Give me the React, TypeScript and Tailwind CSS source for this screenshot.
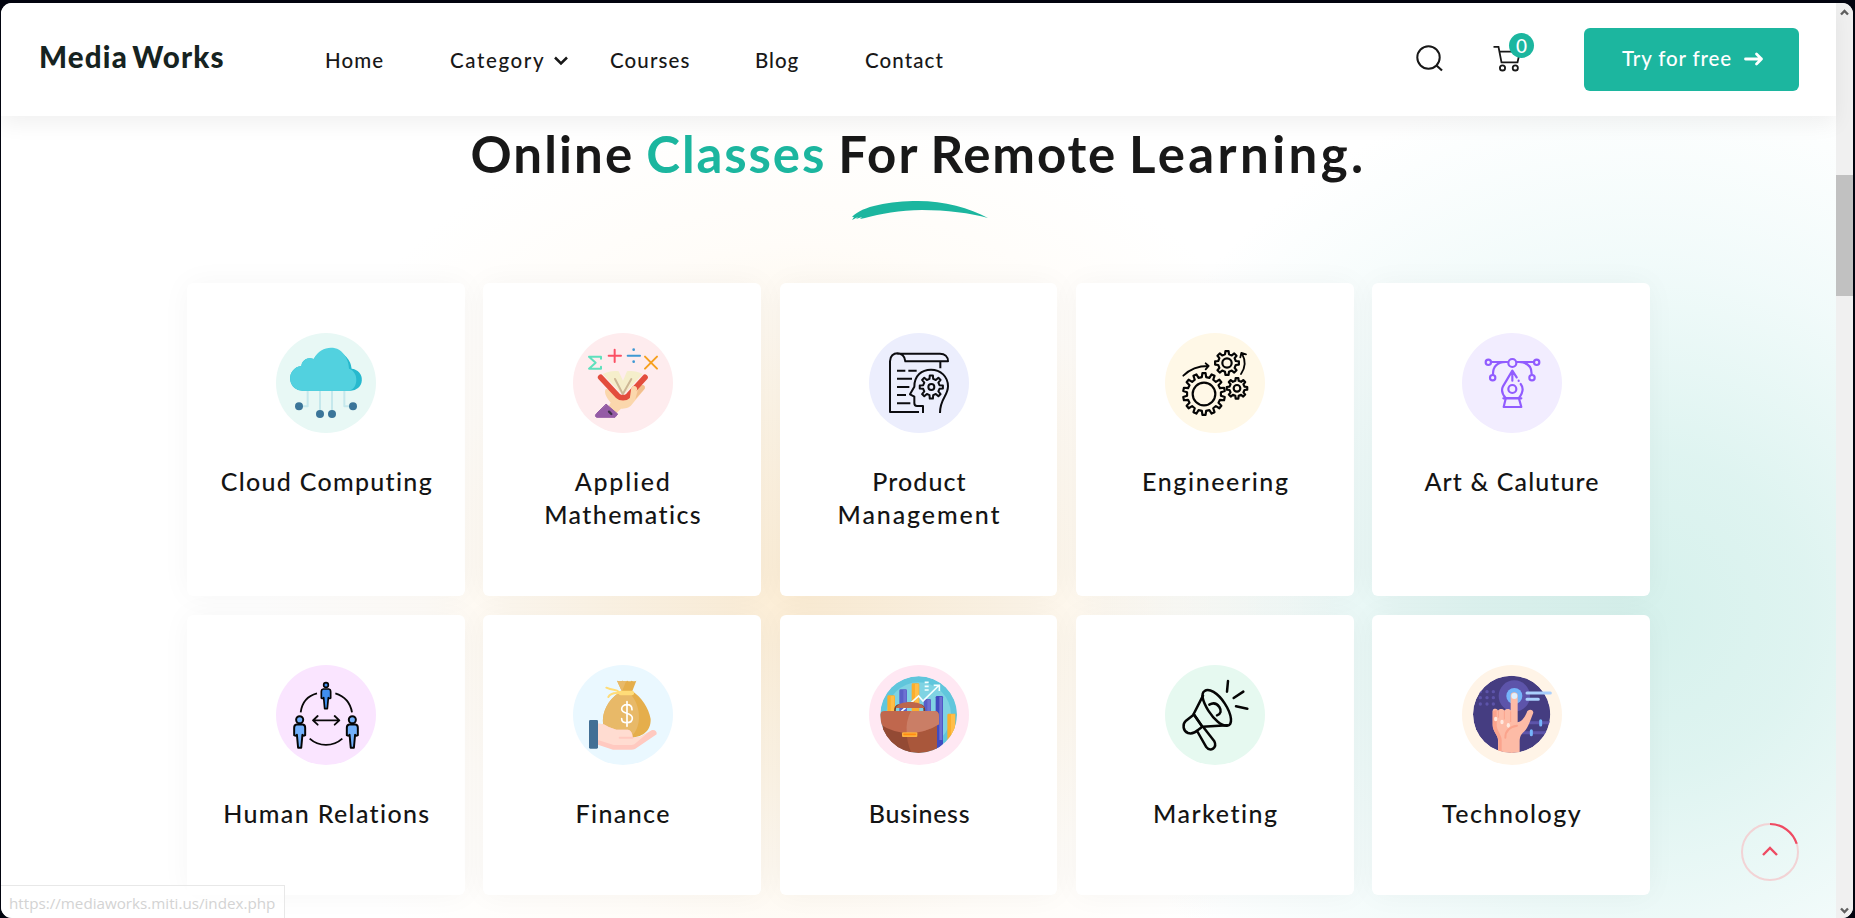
import React from "react";

type IconProps = { box: string; children: React.ReactNode };

function Icon({ box, children }: IconProps) {
  return (
    <svg viewBox={box} className="size-[100px]" fill="none" strokeLinecap="round" strokeLinejoin="round">
      {children}
    </svg>
  );
}

function gear(cx: number, cy: number, inner: number, outer: number, teeth: number, turn = 0) {
  const step = (Math.PI * 2) / teeth;
  const points: string[] = [];
  for (let i = 0; i < teeth; i++) {
    const mid = i * step - Math.PI / 2 + turn;
    const corners: [number, number][] = [
      [inner, -0.28],
      [outer, -0.17],
      [outer, 0.17],
      [inner, 0.28],
    ];
    for (const [r, k] of corners) {
      const a = mid + k * step;
      points.push(`${(cx + r * Math.cos(a)).toFixed(1)} ${(cy + r * Math.sin(a)).toFixed(1)}`);
    }
  }
  return `M${points.join("L")}Z`;
}

function CloudIcon() {
  return (
    <Icon box="48 39 300 300">
      <path d="M143 212v47h-22M180 212v66M216 212v66M253 212v47h22" stroke="#c5e8ec" strokeWidth="6" strokeLinecap="butt" />
      <path d="M131 212a37 37 0 0 1-7-74 26 26 0 0 1 37-21 63 63 0 0 1 114 29 33 33 0 0 1-5 66Z" fill="#27b9ce" />
      <path d="M131 212a37 37 0 0 1-7-74 26 26 0 0 1 37-21C178 84 212 76 237 89c18 12 29 32 30 57 31 10 28 62-1 66Z" fill="#52d1df" />
      <g fill="#3b7599">
        <circle cx="117" cy="259" r="12" />
        <circle cx="180" cy="282" r="12" />
        <circle cx="216" cy="282" r="12" />
        <circle cx="279" cy="259" r="12" />
      </g>
    </Icon>
  );
}

function MathIcon() {
  return (
    <Icon box="51 39 300 300">
      <path d="M135 116v-6H99l20 18-20 18h36v-6" stroke="#5fe0bd" strokeWidth="6" />
      <path d="M176 89v37M158 107h37" stroke="#fb5064" strokeWidth="6" />
      <path d="M215 107h37" stroke="#3e98d3" strokeWidth="6" />
      <circle cx="233" cy="89" r="4" fill="#3e98d3" />
      <circle cx="233" cy="125" r="4" fill="#3e98d3" />
      <path d="m267 110 36 36M303 110l-36 36" stroke="#f6a01f" strokeWidth="6" />
      <path d="M149 208c4-2 10 0 16 6l16 16h38l8-24c-4-10 16-14 16 0l-4 4 12-14c12-4 18 4 14 12l-38 46c-8 10-20 12-32 12l-14 14-24-20 7-12c-16-18-20-34-15-40Z" fill="#fbd7ac" />
      <path d="m247 205 8-9c8-3 14 3 11 10l-28 32Z" fill="#f2bf8d" />
      <path d="M140 162c18-8 34-11 48-8l13 28 12-28c15-3 31 0 47 8l-59 64Z" fill="#f5eecb" />
      <path d="m177 177 23 44M226 177l-25 44" stroke="#cdb795" strokeWidth="6" />
      <path d="m134 172 51 55q6 6 16 6t16-6l50-55" stroke="#e34d3d" strokeWidth="17" />
      <path d="M226 203c5-9 19-6 17 5l-4 21-19 16Z" fill="#fbd7ac" />
      <path d="m151 253 34 29-8 10h-55c-5-2-5-7-1-11Z" fill="#945ba5" stroke="#945ba5" strokeWidth="3" />
      <path d="m159 275 7 7" stroke="#3c2f45" strokeWidth="7" />
    </Icon>
  );
}

function ProductIcon() {
  return (
    <Icon box="57 39 300 300">
      <g stroke="#0c0c10" strokeWidth="6" strokeLinecap="butt">
        <path d="M207 276h-87V124c0-32 44-32 46 0h128c0-14-10-23-24-23H142M271 126v19" />
        <path d="M141 152h25M175 152h25M141 176h45M141 201h37M141 225h27M141 250h40" />
        <path d="M219 279v-21h-18c-6 0-8-4-8-9v-19l-13-7 13-23c0-33 22-51 50-51 29 0 51 21 51 50 0 30-24 35-24 80" />
        <path d={gear(244, 201, 25, 35, 8)} />
        <circle cx="244" cy="201" r="9" />
      </g>
    </Icon>
  );
}

function EngineeringIcon() {
  return (
    <Icon box="45 39 300 300">
      <g stroke="#050505" strokeWidth="6.5">
        <path d={gear(162, 222, 51, 63, 14)} />
        <circle cx="162" cy="222" r="34" />
        <path d={gear(231, 129, 27, 36, 8)} />
        <circle cx="231" cy="129" r="14" />
        <path d={gear(261, 205, 23, 31, 8)} />
        <circle cx="261" cy="205" r="10" />
        <path d="M100 167c20-20 42-29 75-29M167 130l9 8-9 10M273 162c14-20 14-41 3-61M271 112l3-13 14 4" strokeWidth="5.5" />
      </g>
    </Icon>
  );
}

function ArtIcon() {
  return (
    <Icon box="933 39 300 300">
      <g stroke="#915cff" strokeWidth="6.5">
        <path d="M1022 126h47M1099 126h47M1026 162c0-22 13-35 38-36M1142 162c0-22-13-35-38-36" />
        <circle cx="1012" cy="127" r="8" />
        <circle cx="1157" cy="127" r="8" />
        <circle cx="1084" cy="129" r="12" />
        <circle cx="1025" cy="173" r="8" />
        <circle cx="1143" cy="173" r="8" />
        <path d="m1097 172-13-20-28 47c-6 12-2 24 8 35h40c10-13 17-27 5-42M1084 155v27M1103 182v1" />
        <circle cx="1084" cy="207" r="12" />
        <path d="M1057 235h54M1064 236l-6 25h53l-7-25" />
      </g>
    </Icon>
  );
}

function Person({ x, y, big }: { x: number; y: number; big?: boolean }) {
  return (
    <g transform={`translate(${x} ${y}) scale(${big ? 1.18 : 1})`} fill={big ? "#72b0fb" : "#408fef"} stroke="#050505" strokeWidth="5">
      <circle cx="0" cy="8" r={big ? 9 : 7} />
      <path d="M-8 20H8q6 1 6 8v19q-5 3-7-1L4 79H-4L-7 46q-2 4-7 1V28q0-7 6-8Z" />
    </g>
  );
}

function PeopleIcon() {
  return (
    <Icon box="48 45 300 300">
      <path d="M122 187c4-30 22-50 49-57M226 130c26 8 45 28 50 57M149 266c28 25 70 25 98 0" stroke="#080808" strokeWidth="5.5" strokeLinecap="butt" />
      <path d="M159 211h78M173 198l-14 13 14 13M224 198l14 13-14 13" stroke="#080808" strokeWidth="5.5" />
      <Person x={198} y={97} />
      <Person x={119} y={200} big />
      <Person x={277} y={200} big />
    </Icon>
  );
}

function FinanceIcon() {
  return (
    <Icon box="936 45 300 300">
      <path d="M1068 92q9 4 16 0 8 4 15 0 7 4 13 0 8 4 14 0l-12 31c28 20 49 50 55 84 1 38-26 56-66 56h-45c-20-14-35-33-32-58 4-35 25-64 56-82Z" fill="#e5ae4b" />
      <path d="M1068 92q9 4 16 0 6 3 12 0l-13 32h17c42 35 46 110 8 138h-50c-20-14-35-33-32-58 4-35 25-64 56-82Z" fill="#e8b968" />
      <path d="M1036 113q11 5 22 6t18 9M1042 141q7-14 31-12" stroke="#ffdc78" strokeWidth="6" />
      <rect x="1073" y="122" width="46" height="14" rx="6" fill="#ffdc78" />
      <path d="M1113 179c0-10-6-15-15-15s-16 5-16 13c0 17 31 8 32 27 0 9-7 14-16 14-10 0-16-5-16-12M1098 155v74" stroke="#fff" strokeWidth="5" />
      <path d="M1011 221q18-1 32 10l23 8h35q13 2 14 25l24-4 34-20c10-1 15 4 14 13l-65 44q-5 2-11 2h-55l-45-15Z" fill="#ffc9c0" />
      <path d="M1011 221q18-1 32 10l23 8h35q13 2 14 25l24-4 22-12-40 34q-5 3-10 3h-53l-47-15Z" fill="#ffdcd1" />
      <path d="M1076 263h38" stroke="#ffc9c0" strokeWidth="6" />
      <rect x="984" y="210" width="27" height="86" rx="4" fill="#426f95" />
    </Icon>
  );
}

function BusinessIcon() {
  return (
    <Icon box="57 45 300 300">
      <clipPath id="business-disc">
        <circle cx="206" cy="194" r="115" />
      </clipPath>
      <g clipPath="url(#business-disc)">
        <circle cx="206" cy="194" r="116" fill="#60c6dc" />
        <circle cx="206" cy="194" r="97" fill="#7fd3e3" />
        <path d="M112 230v-90q0-4 4-4h15q4 0 4 4v90ZM185 230V104q0-4 4-4h15q4 0 4 4v126ZM292 300V195q0-4 4-4h20v110Z" fill="#fbae2c" />
        <path d="M148 230V122q0-4 4-4h15q4 0 4 4v108ZM221 230v-79q0-4 4-4h14q4 0 4 4v79Z" fill="#5a5ec6" />
        <path d="M257 310V142q0-4 4-4h14q4 0 4 4v168Z" fill="#404bc0" />
        <path d="M122 138h11v60h-11ZM195 102h11v60h-11ZM303 193h12v70h-12Z" fill="#ffbe49" />
        <path d="M160 120h9v60h-9ZM232 149h9v60h-9ZM268 140h9v130h-9Z" fill="#6d70d2" />
        <path d="m154 184 52-46 13 15 49-48M251 106h17v17M224 97h12M224 109h12M224 120h12" stroke="#f4ffff" strokeWidth="5" strokeLinecap="butt" strokeLinejoin="miter" />
        <path d="M135 187v-9q1-11 12-13M223 187v-9q-1-11-12-13" stroke="#71412e" strokeWidth="5" />
        <path d="M137 174c8-24 79-24 86 0Z" fill="#bc664c" />
        <path d="M98 226h163v90H98Z" fill="#a9573b" />
        <path d="M98 226h72q-3 50 18 90H98Z" fill="#934a34" />
        <path d="M90 199q0-16 14-16h149q14 0 14 16v24q-40 26-89 26t-88-26Z" fill="#c0674d" />
        <path d="M183 183h70q14 0 14 16v24q-42 27-97 26-3-36 13-66Z" fill="#ca7e66" />
        <rect x="156" y="247" width="46" height="14" rx="3" fill="#fdb13d" />
        <path d="M162 253h34" stroke="#ff8c12" strokeWidth="5" />
      </g>
    </Icon>
  );
}

function MarketingIcon() {
  return (
    <Icon box="945 45 300 300">
      <g stroke="#050505" strokeWidth="7.5">
        <path d="M1134 93l-3 32M1180 125l-29 19M1158 169l34 7" />
        <path d="M1064 123c12-10 39 5 60 37 23 35 25 67 7 67-16 1-39-18-56-45-18-29-23-52-11-59Z" />
        <path d="m1059 137-28 55 26 38 75-4" />
        <path d="m1031 194-23 18c-12 11-9 31 6 37 9 3 20 0 30-9l13-10-26-37" />
        <path d="m1043 246 25 44c14 18 34 3 25-16l-31-40" />
        <path d="M1078 164c12-7 23-3 30 7 7 11 5 21-7 25" />
      </g>
    </Icon>
  );
}

function TechnologyIcon() {
  return (
    <Icon box="63 45 300 300">
      <clipPath id="technology-disc">
        <circle cx="212" cy="193" r="116" />
      </clipPath>
      <g clipPath="url(#technology-disc)">
        <circle cx="212" cy="193" r="116" fill="#453d81" />
        <circle cx="220" cy="138" r="47" fill="#5d54aa" />
        <path d="M260 218h70M240 248h80" stroke="#5d54aa" strokeWidth="9" />
        {[118, 138, 157].map((x) =>
          [125, 143, 162].map((y) => <circle key={`${x}-${y}`} cx={x} cy={y} r="5" fill="#5d54aa" />),
        )}
        <circle cx="220" cy="138" r="24" fill="#75b5fb" />
        <path d="M171 320v-50c0-15-16-26-16-45v-43c0-8 14-7 16 0 2-7 17-7 19 0 2-7 19-7 19 0v-47c0-11 21-11 21 0v82q16-3 27-29c3-12 20-11 20 0-10 24-14 43-28 57-8 7-13 13-13 30v45Z" fill="#fdbba6" />
        <path d="M155 183v43c0 18 17 32 17 46v40h10v-42c0-15-15-29-15-44v-46Z" fill="#fba48d" />
        <path d="M172 184v18M190 184v23M209 185v30" stroke="#fba48d" strokeWidth="3" />
        <path d="M193 263q0-31 35-36" stroke="#fba48d" strokeWidth="6" />
        <circle cx="220" cy="138" r="9" fill="#dff0ff" />
        <g fill="#ffe9df">
          <ellipse cx="164" cy="207" rx="5" ry="7" />
          <ellipse cx="183" cy="216" rx="5" ry="7" />
          <ellipse cx="202" cy="226" rx="5" ry="7" />
        </g>
        <path d="M299 212v13M271 242v12" stroke="#75b5fb" strokeWidth="9" />
      </g>
      <path d="M258 129h70M258 148h34" stroke="#a9cffc" strokeWidth="9" />
    </Icon>
  );
}

type Line = { text: string; tracking: string };
type Category = { lines: Line[]; tint: string; icon: React.ReactNode };

const categories: Category[] = [
  { lines: [{ text: "Cloud Computing", tracking: "tracking-[1.3px]" }], tint: "bg-[#e8f8f5]", icon: <CloudIcon /> },
  {
    lines: [
      { text: "Applied", tracking: "tracking-[1.8px]" },
      { text: "Mathematics", tracking: "tracking-[1.4px]" },
    ],
    tint: "bg-[#feecee]",
    icon: <MathIcon />,
  },
  {
    lines: [
      { text: "Product", tracking: "tracking-[1.1px]" },
      { text: "Management", tracking: "tracking-[1.9px]" },
    ],
    tint: "bg-[#eceefd]",
    icon: <ProductIcon />,
  },
  { lines: [{ text: "Engineering", tracking: "tracking-[1.6px]" }], tint: "bg-[#fff8e7]", icon: <EngineeringIcon /> },
  { lines: [{ text: "Art & Caluture", tracking: "tracking-[1.1px]" }], tint: "bg-[#f2edff]", icon: <ArtIcon /> },
  { lines: [{ text: "Human Relations", tracking: "tracking-[1.35px]" }], tint: "bg-[#fae5ff]", icon: <PeopleIcon /> },
  { lines: [{ text: "Finance", tracking: "tracking-[1.4px]" }], tint: "bg-[#eaf8ff]", icon: <FinanceIcon /> },
  { lines: [{ text: "Business", tracking: "tracking-[0.7px]" }], tint: "bg-[#ffe8f3]", icon: <BusinessIcon /> },
  { lines: [{ text: "Marketing", tracking: "tracking-[1.5px]" }], tint: "bg-[#e6f9f0]", icon: <MarketingIcon /> },
  { lines: [{ text: "Technology", tracking: "tracking-[1.5px]" }], tint: "bg-[#fff4e7]", icon: <TechnologyIcon /> },
];

function CategoryCard({ lines, tint, icon }: Category) {
  return (
    <a className="flex flex-col items-center rounded-[6px] bg-white pt-[50px] shadow-[0_0_30px_rgba(20,20,40,0.04)]">
      <span className={`ml-px flex size-[100px] items-center justify-center rounded-full ${tint}`}>{icon}</span>
      <h3 className="mt-8 pl-[2px] text-center text-[25px] leading-[33px] font-medium text-[#141414]">
        {lines.map((line) => (
          <span key={line.text} className={`block whitespace-nowrap ${line.tracking}`}>
            {line.text}
          </span>
        ))}
      </h3>
    </a>
  );
}

function Header() {
  return (
    <header className="relative z-10 flex h-[113px] shrink-0 items-center bg-white pr-[37px] pl-[38px] shadow-[0_8px_20px_rgba(0,0,0,0.06)]">
      <a className="w-[286px] pb-[6px] text-[29.5px] leading-9 font-black tracking-[1.2px] [word-spacing:-4px] whitespace-nowrap text-[#162321]">
        Media Works
      </a>
      <nav className="flex items-center pt-px text-[20.5px] leading-7 font-medium text-[#181818]">
        <a className="w-[125px] tracking-[1.1px]">Home</a>
        <a className="flex w-[160px] items-center tracking-[1.6px]">
          <span className="w-[104px]">Category</span>
          <svg width="14" height="10" viewBox="0 0 14 10" fill="none" stroke="#181818" strokeWidth="2.5" className="mt-[2px]">
            <path d="m1 1.5 6 6 6-6" />
          </svg>
        </a>
        <a className="w-[145px] tracking-[1.1px]">Courses</a>
        <a className="w-[110px] tracking-[1px]">Blog</a>
        <a className="tracking-[1.1px]">Contact</a>
      </nav>
      <div className="ml-auto flex items-center">
        <svg width="27" height="27" viewBox="0 0 27 27" fill="none" stroke="#181818" strokeWidth="2" className="mr-[50px] mb-[3px]">
          <circle cx="12.5" cy="12.5" r="11.2" />
          <path d="m20.5 20.5 5.5 5" strokeWidth="2.2" />
        </svg>
        <div className="relative mr-[63px] mb-[3px]">
          <svg width="28" height="27" viewBox="0 0 28 27" fill="none" stroke="#181818" strokeWidth="1.8">
            <path d="M.5 1.8h5l3 15.5h16L27 6.7H6.5" />
            <circle cx="9.5" cy="22.9" r="2.6" />
            <circle cx="22.3" cy="22.9" r="2.6" />
          </svg>
          <span className="absolute top-[-12px] left-[16px] flex size-[25px] items-center justify-center rounded-full bg-[#1cb69f] text-[19px] leading-none font-medium text-white">
            0
          </span>
        </div>
        <button className="flex h-[63px] w-[215px] items-center rounded-[6px] bg-[#1cb69f] pb-[3px] pl-[38px] text-[20.5px] font-medium tracking-[0.85px] whitespace-nowrap text-white">
          <span className="w-[122px] text-left">Try for free</span>
          <svg width="20" height="14" viewBox="0 0 20 14" fill="none" stroke="#fff" strokeWidth="2.8" strokeLinecap="round" strokeLinejoin="round" className="mt-px">
            <path d="M1.5 7h16M12.5 2l5 5-5 5" />
          </svg>
        </button>
      </div>
    </header>
  );
}

function Scrollbar() {
  return (
    <div className="flex w-[17px] shrink-0 flex-col items-center justify-between bg-[#f0f0f0] pt-[6px] pb-[4px]">
      <svg width="9" height="7" viewBox="0 0 9 7" fill="none" stroke="#606060" strokeWidth="2.4">
        <path d="M1 5.5 4.5 2 8 5.5" />
      </svg>
      <div className="mb-[452px] h-[121px] w-full bg-[#c1c1c1]" />
      <svg width="9" height="7" viewBox="0 0 9 7" fill="none" stroke="#606060" strokeWidth="2.4">
        <path d="M1 1.5 4.5 5 8 1.5" />
      </svg>
    </div>
  );
}

export default function App() {
  return (
    <div className="h-[918px] w-[1855px] overflow-hidden bg-[#02040f] pt-[3px] pr-[2px] pl-px font-['Lato',sans-serif]">
      <div className="relative flex h-full overflow-hidden rounded-[11px] bg-white">
        <div className="flex min-w-0 flex-1 flex-col bg-[radial-gradient(ellipse_540px_500px_at_800px_590px,#fcedd5_0%,rgba(252,240,220,0.75)_35%,rgba(255,248,238,0.4)_70%,rgba(255,255,255,0)_100%),radial-gradient(ellipse_560px_540px_at_1640px_610px,#d6f1ec_0%,rgba(217,242,238,0.85)_30%,rgba(230,247,246,0.55)_65%,rgba(255,255,255,0)_100%)]">
          <Header />
          <main className="flex flex-col items-center">
            <h2 className="mt-[7px] h-[62px] text-[51px] leading-[62px] font-bold tracking-[2.1px] [word-spacing:-2.5px] whitespace-nowrap text-[#181818]">
              Online <span className="tracking-[1.9px] text-[#1cb69f]">Classes</span> For{" "}
              <span className="tracking-[1.8px]">Remote</span> <span className="tracking-[3.4px]">Learning.</span>
            </h2>
            <svg width="136" height="20" viewBox="0 0 136 20" fill="#1cb69f" className="mt-[15px] ml-[3px]">
              <path d="M0 17C10 6 38 1 66 1c26 0 52 7 70 17-17-5-42-8-66-8-22 0-42 4-57 8l-5 1 2-2-6 2 2-2-6 3 2-3Z" />
            </svg>
            <div className="mt-[63px] grid w-[1463px] grid-cols-5 grid-rows-[313px_280px] gap-x-[18.5px] gap-y-[19px]">
              {categories.map((c) => (
                <CategoryCard key={c.lines[0].text} {...c} />
              ))}
            </div>
          </main>
        </div>
        <Scrollbar />
        <svg className="absolute top-[819px] left-[1739px]" width="60" height="60" viewBox="0 0 60 60" fill="none">
          <circle cx="30" cy="30" r="28" stroke="#f2d3d5" strokeWidth="2" />
          <path d="M30 2a28 28 0 0 1 26.7 19.8" stroke="#ee4a62" strokeWidth="2.2" />
          <path d="m23 33 7-7 7 7" stroke="#ee4a62" strokeWidth="2.4" />
        </svg>
        <div className="absolute bottom-0 left-0 flex h-[33px] w-[284px] items-center border-t border-r border-[#e8e8e8] bg-white/80 pt-[3px] pl-[8px] font-['Open_Sans',sans-serif] text-[15.2px] whitespace-nowrap text-[#d3d3d3]">
          https://mediaworks.miti.us/index.php
        </div>
      </div>
    </div>
  );
}
